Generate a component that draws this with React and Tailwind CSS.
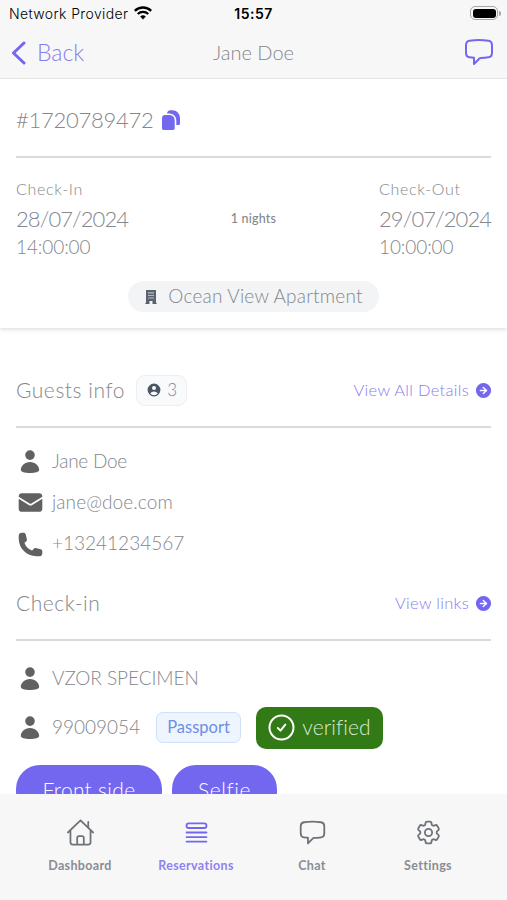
import React from 'react';
import {
    HiEnvelope,
    HiMiniArrowRightCircle,
    HiMiniUserCircle,
    HiOutlineChatBubbleLeft,
    HiOutlineCog6Tooth,
    HiOutlineQueueList,
    HiPhone,
} from 'react-icons/hi2';

const HomeIcon = ({ className }) => (
    <svg className={className} viewBox="0 0 28 28" fill="none" stroke="currentColor" strokeWidth="1.7" strokeLinecap="round" strokeLinejoin="round">
        <path d="M1.8 14 14 2.2 26.2 14M4.3 12v11.4c0 1.3.9 2.2 2.2 2.2h15c1.3 0 2.2-.9 2.2-2.2V12M21.5 9V3.8M10.8 25.4v-6.2c0-1 .7-1.7 1.7-1.7h3c1 0 1.7.7 1.7 1.7v6.2" />
    </svg>
);

const PersonIcon = ({ className }) => (
    <svg className={className} viewBox="0 0 28 28" fill="currentColor">
        <circle cx="14" cy="7.1" r="4.8" />
        <path d="M14 13.9c5.4 0 9.2 3.700 9.2 8.200 0 1.700-4 3-9.200 3s-9.200-1.300-9.200-3c0-4.500 3.800-8.200 9.200-8.200z" />
    </svg>
);

const CopyIcon = ({ className }) => (
    <svg className={className} viewBox="0 0 18 20" fill="currentColor">
        <path d="M2.900 5h4.600c3 0 5.200 2.400 5.200 5.400v7.900c0 .9-.7 1.700-1.700 1.700H1.700C.7 20 0 19.200 0 18.300V7.900C0 6.300 1.300 5 2.900 5z" />
        <path d="M4.900 3.500C5.300 1.600 6.400.3 8.300.3h2c4.200 0 7.700 3.500 7.700 7.700v5.400c0 1-.7 1.700-1.700 1.700h-2V10.600c0-4.200-3-7.100-7-7.100z" />
    </svg>
);

const BuildingIcon = ({ className }) => (
    <svg className={className} viewBox="0 0 12 14" fill="currentColor">
        <path fillRule="evenodd" d="M1 0h10v12.8h.6V14H7.5v-3h-3v3H.4v-1.2H1zM3.4 2.3v1.1h1.2V2.3zm2 0v1.1h1.2V2.3zm2 0v1.1h1.2V2.3zm-4 2.6V6h1.2V4.9zm2 0V6h1.2V4.9zm2 0V6h1.2V4.9zm-4 2.6v1.1h1.2V7.5zm2 0v1.1h1.2V7.5zm2 0v1.1h1.2V7.5z" />
    </svg>
);

const WifiIcon = ({ className }) => (
    <svg className={className} viewBox="0 0 18 14" fill="none" stroke="currentColor" strokeWidth="2.3">
        <path d="M.8 4.9a11.6 11.6 0 0 1 16.4 0M3.8 8a7.4 7.4 0 0 1 10.4 0" />
        <path d="M9 13.5 6.2 10.6a4 4 0 0 1 5.6 0z" fill="currentColor" stroke="none" />
    </svg>
);

const StatusBar = () => (
    <div className="h-7 px-[9px] grid grid-cols-3 items-center text-black font-['Inter',sans-serif] text-[14px]">
        <div className="flex items-center gap-[6px] whitespace-nowrap -mt-[1px]">
            <span className="tracking-[0.38px]">Network Provider</span>
            <WifiIcon className="w-[18px] h-[14px] shrink-0 -mt-[1px]" />
        </div>
        <span className="text-center font-semibold tracking-[0.5px] -mt-[1px]">15:57</span>
        <div className="flex items-center justify-end -mr-[3px] gap-[1px] -mt-[2px]">
            <div className="w-7 h-[14px] rounded-[5px] border border-[#a5a5a5] p-[1.5px]">
                <div className="h-full rounded-[3px] bg-black" />
            </div>
            <div className="w-[2px] h-[5px] rounded-r-full bg-[#a5a5a5]" />
        </div>
    </div>
);

const Stay = ({ label, date, time }) => (
    <div className="w-[112px] whitespace-nowrap">
        <p className="text-[16px] leading-[22px] tracking-[0.7px]">{label}</p>
        <p className="mt-[4px] text-[22px] leading-[30px] tracking-[-0.9px]">{date}</p>
        <p className="text-[19px] leading-[26px] tracking-[-0.1px]">{time}</p>
    </div>
);

const SectionHeader = ({ title, link, children }) => (
    <div className="h-[50px] border-b-2 border-[#dadada] flex items-start justify-between box-content">
        <div className="flex items-center h-7 gap-[11px]">
            <h2 className="text-[21px] tracking-[0.55px]">{title}</h2>
            {children}
        </div>
        <a href="#" className="flex items-center h-7 gap-[5px] text-[#7367f0]">
            <span className="text-[16.5px] tracking-[0.3px] opacity-85">{link}</span>
            <HiMiniArrowRightCircle className="w-[19px] h-[19px] -mr-[2px]" />
        </a>
    </div>
);

const InfoRow = ({ icon: RowIcon, iconClass = 'w-7 h-7', children }) => (
    <div className="flex items-center h-[41px] gap-[8px] text-[19px]">
        <span className="w-7 h-7 shrink-0 flex items-center justify-center text-[#616161]">
            <RowIcon className={iconClass} />
        </span>
        {children}
    </div>
);

const tabs = [
    { name: 'Dashboard', icon: HomeIcon },
    { name: 'Reservations', icon: HiOutlineQueueList, active: true },
    { name: 'Chat', icon: HiOutlineChatBubbleLeft },
    { name: 'Settings', icon: HiOutlineCog6Tooth },
];

const TabBar = () => (
    <nav className="h-[106px] shrink-0 bg-[#f7f7f7] pl-[22px] pr-[21px] pt-[24px] grid grid-cols-4">
        {tabs.map(({ name, icon: TabIcon, active }) => (
            <a key={name} href="#" className={`flex flex-col items-center ${active ? 'text-[#7367f0]' : 'text-[#6e737a]'}`}>
                <TabIcon className="w-[29px] h-[29px]" />
                <span className="mt-[10px] text-[12.5px] leading-[18px] font-bold tracking-[0.35px] opacity-80">{name}</span>
            </a>
        ))}
    </nav>
);

export default function App() {
    return (
        <div className="w-[507px] h-[900px] overflow-hidden flex flex-col bg-white text-[#84878c] font-light font-['Lato',sans-serif]">
            <header className="h-[79px] shrink-0 bg-[#f7f7f7] border-b border-[#e4e4e4]">
                <StatusBar />
                <div className="h-[50px] px-[11px] grid grid-cols-3 items-center pb-[2px]">
                    <a href="#" className="flex items-center gap-[11px] text-[#7367f0] text-[23px]">
                        <svg className="w-[15px] h-6 mt-[1px]" viewBox="0 0 15 24" fill="none" stroke="currentColor" strokeWidth="3" strokeLinecap="round" strokeLinejoin="round">
                            <path d="M13 2 2.5 12 13 22" />
                        </svg>
                        <span className="opacity-85">Back</span>
                    </a>
                    <h1 className="text-center text-[20px]">Jane Doe</h1>
                    <HiOutlineChatBubbleLeft className="w-[32px] h-[32px] justify-self-end text-[#7367f0] mr-[1px]" />
                </div>
            </header>

            <main className="flex-1 min-h-0 overflow-hidden">
                <section className="h-[249px] px-4 pt-[25px] shadow-[0_2px_4px_rgba(0,0,0,0.12)]">
                    <div className="h-[54px] border-b-2 border-[#dadada] flex items-start">
                        <div className="h-[30px] flex items-center gap-[8px]">
                            <span className="text-[22px] tracking-[-0.25px]">#1720789472</span>
                            <CopyIcon className="w-[18px] h-5 mt-[2px] text-[#7367f0]" />
                        </div>
                    </div>
                    <div className="mt-[20px] flex justify-between">
                        <Stay label="Check-In" date="28/07/2024" time="14:00:00" />
                        <span className="mt-[33px] text-[12.5px] leading-[16px] font-medium tracking-[0.2px]">1 nights</span>
                        <Stay label="Check-Out" date="29/07/2024" time="10:00:00" />
                    </div>
                    <div className="mt-[21px] mx-auto w-[251px] h-[31px] rounded-full bg-[#f3f4f6] flex items-center justify-center gap-[11px] pl-[1px]">
                        <BuildingIcon className="w-3 h-[14px] text-[#5b6270]" />
                        <span className="text-[19px] tracking-[0.2px]">Ocean View Apartment</span>
                    </div>
                </section>

                <section className="px-4 pt-[48px]">
                    <SectionHeader title="Guests info" link="View All Details">
                        <span className="w-[51px] h-[31px] rounded-[9px] border border-[#eceef1] bg-[#f9fafb] flex items-center justify-center gap-[5px] text-[17px]">
                            <HiMiniUserCircle className="w-4 h-4 text-[#4b5563]" />
                            3
                        </span>
                    </SectionHeader>
                    <div className="pt-[13px]">
                        <InfoRow icon={PersonIcon}>
                            <span className="tracking-[-0.25px]">Jane Doe</span>
                        </InfoRow>
                        <InfoRow icon={HiEnvelope} iconClass="w-[27px] h-[27px]">
                            <span className="tracking-[0.1px]">jane@doe.com</span>
                        </InfoRow>
                        <InfoRow icon={HiPhone} iconClass="w-[27px] h-[27px] mt-[2px]">
                            +13241234567
                        </InfoRow>
                    </div>
                </section>

                <section className="px-4 pt-[25px]">
                    <SectionHeader title="Check-in" link="View links" />
                    <div className="pt-[17px]">
                        <InfoRow icon={PersonIcon}>
                            <span className="tracking-[-0.05px]">VZOR SPECIMEN</span>
                        </InfoRow>
                        <div className="mt-[8px]">
                            <InfoRow icon={PersonIcon}>
                                <span className="w-[96px]">99009054</span>
                                <span className="w-[85px] h-[31px] rounded-[7px] border border-[#cfe0f8] bg-[#eef5fe] flex items-center justify-center text-[16.5px] font-normal text-[#6d8ee6]">
                                    Passport
                                </span>
                                <span className="ml-[7px] w-[127px] h-[42px] shrink-0 rounded-[10px] bg-[#317a16] flex items-center justify-center gap-[7px] text-[21px] text-[#dceadb]">
                                    <svg className="w-[27px] h-[27px] text-white" viewBox="0 0 27 27" fill="none" stroke="currentColor" strokeWidth="2" strokeLinecap="round" strokeLinejoin="round">
                                        <circle cx="13.5" cy="13.5" r="12" />
                                        <path d="m9.8 14 2.700 2.600 4.800-6" />
                                    </svg>
                                    <span className="-mt-[2px] tracking-[0.1px]">verified</span>
                                </span>
                            </InfoRow>
                        </div>
                    </div>
                    <div className="mt-[17px] flex gap-[10px] text-[21px] text-white">
                        <button className="w-[146px] h-[50px] rounded-[24px] bg-[#7367f0] tracking-[0.3px]">Front side</button>
                        <button className="w-[105px] h-[50px] rounded-[24px] bg-[#7367f0] tracking-[0.6px]">Selfie</button>
                    </div>
                </section>
            </main>

            <TabBar />
        </div>
    );
}
